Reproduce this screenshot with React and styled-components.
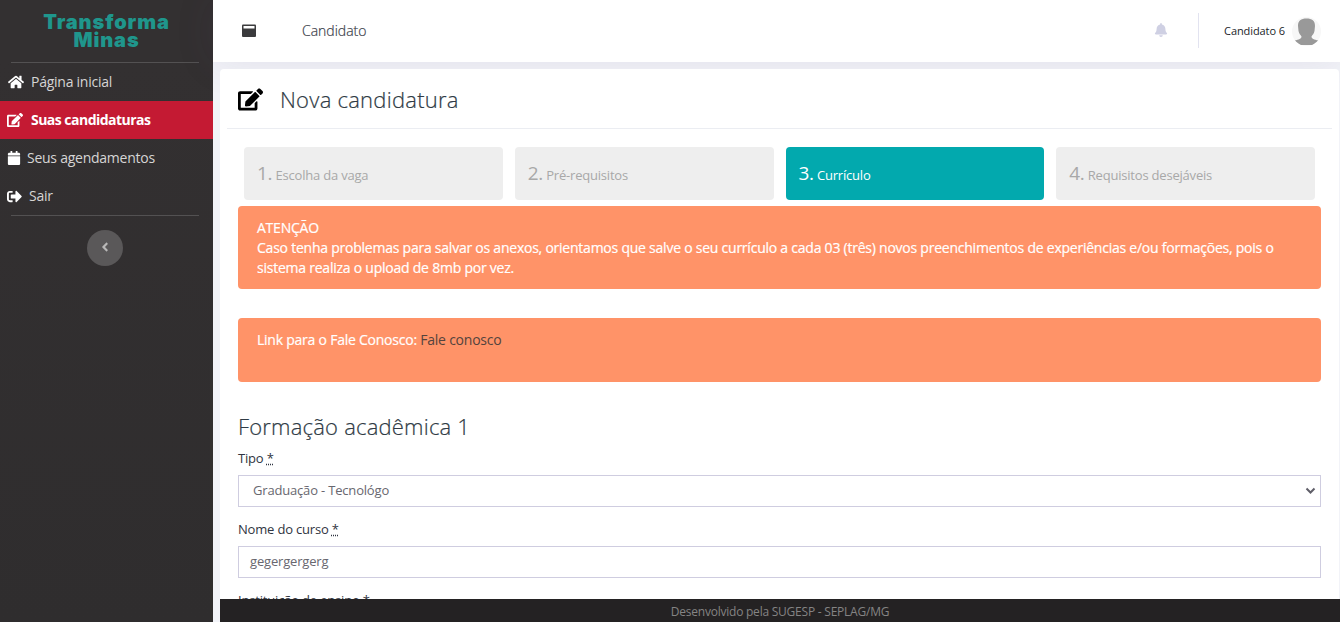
import React from "react";
import styled, { createGlobalStyle } from "styled-components";
import { FaHome, FaEdit, FaCalendar, FaSignOutAlt, FaAngleLeft, FaBell } from "react-icons/fa";

const GlobalStyle = createGlobalStyle`
  * { box-sizing: border-box; }
  html, body { margin: 0; height: 622px; overflow: hidden; }
  body {
    font-family: "Open Sans", "Noto Sans", sans-serif;
    font-size: 13px;
    color: #212529;
    background: #f2f3f8;
  }
`;

const Page = styled.div`
  display: flex;
  width: 1340px;
  height: 622px;
  overflow: hidden;
`;

const Sidebar = styled.aside`
  display: flex;
  flex-direction: column;
  flex: none;
  width: 213px;
  background: linear-gradient(180deg, #333031 10%, #2f2d2e 100%);
`;

const Brand = styled.div`
  height: 62px;
  padding: 13px 0 0 0;
  text-align: center;
  color: #1f968c;
  font-family: Inter, "Open Sans", sans-serif;
  font-size: 20px;
  line-height: 18px;
  font-weight: 900;
  letter-spacing: 0.9px;
`;

const Divider = styled.hr`
  width: 188px;
  height: 1px;
  margin: 0 0 0 11px;
  border: 0;
  background: #535152;
`;

const NavItem = styled.a`
  display: flex;
  align-items: center;
  height: 38px;
  padding-left: ${(p) => p.$indent || 7}px;
  gap: ${(p) => p.$gap}px;
  font-size: 14px;
  letter-spacing: ${(p) => p.$spacing || "-0.25px"};
  font-weight: ${(p) => (p.$active ? 700 : 400)};
  color: ${(p) => (p.$active ? "#fff" : "#d6d5d5")};
  background: ${(p) => (p.$active ? "#c41a33" : "transparent")};
  svg { color: #fff; flex: none; }
  span { padding-bottom: 2px; }
`;

const Collapse = styled.button`
  display: flex;
  align-items: center;
  justify-content: center;
  width: 36px;
  height: 36px;
  margin: 14px 0 0 87px;
  padding: 0 0 2px;
  border: 0;
  border-radius: 50%;
  background: #5a5859;
  color: #b9b8b8;
`;

const Main = styled.div`
  display: flex;
  flex-direction: column;
  flex: 1;
  min-width: 0;
`;

const Header = styled.header`
  display: flex;
  align-items: center;
  flex: none;
  height: 62px;
  padding: 0 19px 2px 29px;
  background: #fff;
  box-shadow: 0 0 40px rgba(82, 63, 105, 0.1);
`;

const WindowIcon = styled.svg`
  width: 14px;
  height: 13px;
  margin-right: 46px;
`;

const HeaderTitle = styled.span`
  flex: 1;
  font-size: 14px;
  font-weight: 300;
  -webkit-text-stroke: 0.2px #3a4049;
  color: #3a4049;
`;

const HeaderRule = styled.span`
  width: 1px;
  height: 35px;
  margin: 0 25px 0 30px;
  background: #e2e3f0;
`;

const UserName = styled.span`
  font-size: 11px;
  margin-right: 7px;
  letter-spacing: -0.08px;
  white-space: nowrap;
`;

const Avatar = styled.svg`
  width: 29px;
  height: 29px;
  margin-top: 2px;
`;

const Card = styled.section`
  display: flex;
  flex-direction: column;
  flex: 1;
  min-height: 0;
  width: 1119px;
  margin: 7px 0 0 7px;
  background: #fff;
  border-radius: 4px 4px 0 0;
  overflow: hidden;
`;

const CardHead = styled.div`
  display: flex;
  align-items: center;
  flex: none;
  height: 60px;
  margin: 0 7px;
  padding: 2px 0 0 11px;
  gap: 17px;
  border-bottom: 1px solid #ebedf2;
  svg { color: #000; }
`;

const Title = styled.h1`
  margin: 0;
  padding-bottom: 2px;
  font-size: 22px;
  line-height: 26px;
  font-weight: 300;
  color: #2f3b45;
  -webkit-text-stroke: 0.2px #2f3b45;
  letter-spacing: 0.25px;
`;

const CardBody = styled.div`
  flex: 1;
  min-height: 0;
  overflow: hidden;
  padding: 18px 18px 0;
`;

const Steps = styled.div`
  display: grid;
  grid-template-columns: repeat(4, 1fr);
  gap: 12px;
  margin: 0 6px 6px;
`;

const Step = styled.div`
  height: 53px;
  padding: 12px 13px;
  border-radius: 4px;
  font-size: 13px;
  line-height: 28px;
  letter-spacing: -0.2px;
  color: ${(p) => (p.$active ? "#fff" : "#a8a8a8")};
  background: ${(p) => (p.$active ? "#02a9ae" : "#eee")};
`;

const StepNumber = styled.span`
  font-size: 19px;
  letter-spacing: -0.3px;
`;

const Alert = styled.div`
  height: ${(p) => p.$height}px;
  margin-bottom: 29px;
  padding: 12px 19px;
  border-radius: 4px;
  background: #ff9368;
  color: #fff;
  font-size: 14px;
  line-height: 20px;
  letter-spacing: -0.235px;
  white-space: nowrap;
  -webkit-text-stroke: 0.2px #fff;
`;

const AlertLink = styled.a`
  color: #54433d;
  -webkit-text-stroke: 0;
`;

const Section = styled.h2`
  margin: 31px 0 9px;
  font-size: 22px;
  line-height: 26px;
  font-weight: 300;
  color: #2f3b45;
  -webkit-text-stroke: 0.2px #2f3b45;
  letter-spacing: 0.2px;
`;

const Field = styled.div`
  margin-bottom: 12px;
`;

const Label = styled.label`
  display: block;
  height: 20px;
  margin-bottom: 7px;
  line-height: 20px;
  font-size: 13px;
  letter-spacing: -0.18px;
  color: #2f3441;
  abbr { text-decoration: underline dotted; }
`;

const Control = styled.div`
  display: flex;
  align-items: center;
  justify-content: space-between;
  height: 32px;
  padding: 0 4px 2px ${(p) => p.$indent}px;
  border: 1px solid #cfcde0;
  font-size: 13px;
  letter-spacing: -0.18px;
  color: #68676f;
`;

const Footer = styled.footer`
  flex: none;
  height: 23px;
  margin-left: 7px;
  background: #242223;
  color: #858484;
  font-size: 12px;
  line-height: 25px;
  letter-spacing: -0.23px;
  text-align: center;
`;

const Required = () => <abbr title="obrigatório">*</abbr>;

const steps = ["Escolha da vaga", "Pré-requisitos", "Currículo", "Requisitos desejáveis"];

export default function App() {
  return (
    <Page>
      <GlobalStyle />
      <Sidebar>
        <Brand>Transforma<br />Minas</Brand>
        <Divider />
        <NavItem $gap={7} $indent={8}><FaHome size={16} /><span>Página inicial</span></NavItem>
        <NavItem $gap={8} $active $spacing="-0.52px"><FaEdit size={16} /><span>Suas candidaturas</span></NavItem>
        <NavItem $gap={6}><FaCalendar size={14} /><span>Seus agendamentos</span></NavItem>
        <NavItem $gap={7}><FaSignOutAlt size={15} /><span>Sair</span></NavItem>
        <Divider />
        <Collapse><FaAngleLeft size={14} /></Collapse>
      </Sidebar>
      <Main>
        <Header>
          <WindowIcon viewBox="0 0 14 13">
            <rect x="0" y="0.500" width="14" height="12.500" rx="1" fill="#3b3b3d" />
            <rect x="1.500" y="2" width="11" height="2.500" fill="#fff" />
          </WindowIcon>
          <HeaderTitle>Candidato</HeaderTitle>
          <FaBell size={14} color="#cfd0e3" />
          <HeaderRule />
          <UserName>Candidato 6</UserName>
          <Avatar viewBox="0 0 29 29">
            <defs><clipPath id="round"><circle cx="14.5" cy="14.5" r="14.5" /></clipPath></defs>
            <g clipPath="url(#round)">
              <rect width="29" height="29" fill="#f7f7f7" />
              <path d="M6 9C6 3.500 9 1.500 14.500 1.500S23 3.500 23 9L22.500 14C22 16.500 20.500 18 19.500 19.500C19.500 22 22 22.500 26.500 23.500L24 28H5L2.500 23.500C7 22.500 9.500 22 9.500 19.500C8.500 18 7 16.500 6.500 14Z" fill="#999" />
            </g>
          </Avatar>
        </Header>
        <Card>
          <CardHead><FaEdit size={25} /><Title>Nova candidatura</Title></CardHead>
          <CardBody>
            <Steps>
              {steps.map((name, i) => (
                <Step key={name} $active={i === 2}><StepNumber>{i + 1}.</StepNumber> {name}</Step>
              ))}
            </Steps>
            <Alert $height={83}>
              ATENÇÃO<br />
              Caso tenha problemas para salvar os anexos, orientamos que salve o seu currículo a cada 03 (três) novos preenchimentos de experiências e/ou formações, pois o<br />
              sistema realiza o upload de 8mb por vez.
            </Alert>
            <Alert $height={64}>Link para o Fale Conosco: <AlertLink>Fale conosco</AlertLink></Alert>
            <Section>Formação acadêmica 1</Section>
            <Field>
              <Label>Tipo <Required /></Label>
              <Control $indent={14}>
                Graduação - Tecnológo
                <svg width="11" height="8" viewBox="0 0 11 8"><path d="M1.500 2.500L5.500 6.500L9.500 2.500" fill="none" stroke="#5f5e68" strokeWidth="2" /></svg>
              </Control>
            </Field>
            <Field>
              <Label>Nome do curso <Required /></Label>
              <Control $indent={11}>gegergergerg</Control>
            </Field>
            <Field>
              <Label>Instituição de ensino <Required /></Label>
              <Control $indent={11} />
            </Field>
          </CardBody>
        </Card>
        <Footer>Desenvolvido pela SUGESP - SEPLAG/MG</Footer>
      </Main>
    </Page>
  );
}
